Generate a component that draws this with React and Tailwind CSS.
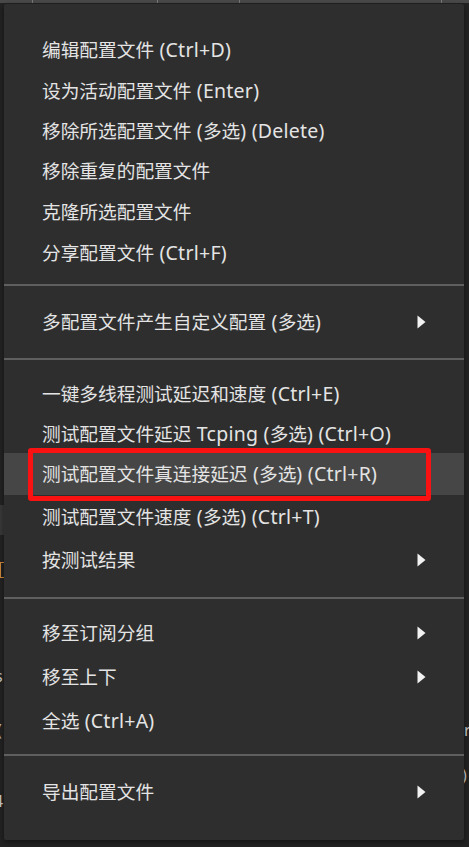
import React from "react";

const Arrow = () => (
  <svg width="9" height="14" viewBox="0 0 9 14" className="shrink-0">
    <path d="M0.5 0.5 L8.5 7 L0.5 13.5 Z" fill="#f2f2f2" />
  </svg>
);

const CJK = /[\u3000-\u9fff\uff00-\uffef]/;

function splitRuns(text) {
  const runs = [];
  let cur = "";
  let curCjk = null;
  for (const ch of text) {
    const isCjk = CJK.test(ch);
    if (curCjk === null || isCjk === curCjk) {
      cur += ch;
      curCjk = isCjk;
    } else {
      runs.push({ t: cur, cjk: curCjk });
      cur = ch;
      curCjk = isCjk;
    }
  }
  if (cur) runs.push({ t: cur, cjk: curCjk });
  return runs;
}

const Label = ({ text }) => (
  <span className="whitespace-pre">
    {splitRuns(text).map((r, i) =>
      r.cjk ? (
        <span key={i}>{r.t}</span>
      ) : (
        <span key={i} className="text-[19.5px] tracking-[0.25px]">
          {r.t}
        </span>
      )
    )}
  </span>
);

const Row = ({ label, h, arrow, active }) => (
  <div
    className={`flex items-center justify-between pl-[38px] pr-[38px] ${h} ${active ? "bg-[#464646]" : ""}`}
  >
    <Label text={label} />
    {arrow ? <Arrow /> : null}
  </div>
);

const Sep = ({ cls }) => <div className={`h-[2px] bg-[#5f5f5f] ${cls}`} />;

export default function App() {
  return (
    <div
      className="relative h-[847px] w-[469px] overflow-hidden bg-[#232323]"
      style={{ fontFamily: '"Noto Sans", "Noto Sans CJK SC", sans-serif' }}
    >
      {/* background app: header strip */}
      <div className="flex h-[3px] bg-[#4a4a4a]">
        <div className="w-[33px] border-r border-[#7a7a7a]" />
        <div className="w-[125px] border-r border-[#7a7a7a]" />
        <div className="w-[82px] border-r border-[#7a7a7a]" />
        <div className="w-[202px] border-r border-[#7a7a7a]" />
      </div>
      {/* background fragments at edges */}
      <div className="absolute left-0 top-[505px] h-[30px] w-[6px] bg-[#3a3a3a]" />
      <div className="absolute left-0 top-[562px] h-[16px] w-[5px] border border-[#d08a3a]" />
      <div className="absolute left-0 top-[668px] h-[18px] w-[4px] overflow-hidden">
        <div className="ml-[-5px] text-[16px] leading-none text-[#cfcfcf]">s</div>
      </div>
      <div className="absolute left-0 top-[722px] h-[18px] w-[4px] overflow-hidden">
        <div className="ml-[-3px] text-[16px] leading-none text-[#cfcfcf]">(</div>
      </div>
      <div className="absolute left-0 top-[793px] h-[18px] w-[4px] overflow-hidden">
        <div className="ml-[-6px] text-[16px] leading-none text-[#cfcfcf]">4</div>
      </div>
      <div className="absolute left-[464px] top-[722px] h-[18px] w-[5px] overflow-hidden">
        <div className="text-[16px] leading-none text-[#cfcfcf]">r</div>
      </div>
      <div className="absolute left-[462px] top-[767px] h-[18px] w-[7px] overflow-hidden">
        <div className="text-[16px] leading-none text-[#cfcfcf]">)</div>
      </div>

      {/* context menu */}
      <div className="absolute left-[4px] top-[4px] flex w-[460px] flex-col rounded-[2px] bg-[#2e2e2e] pb-[26px] pt-[25px] text-[18.7px] leading-none text-[#e4e4e4] shadow-[0_2px_6px_rgba(0,0,0,0.5)]">
        <Row label="编辑配置文件 (Ctrl+D)" h="h-[41px]" />
        <Row label="设为活动配置文件 (Enter)" h="h-[41px]" />
        <Row label="移除所选配置文件 (多选) (Delete)" h="h-[40px]" />
        <Row label="移除重复的配置文件" h="h-[41px]" />
        <Row label="克隆所选配置文件" h="h-[40px]" />
        <Row label="分享配置文件 (Ctrl+F)" h="h-[41px]" />
        <Sep cls="mt-[11px] mb-[14px]" />
        <Row label="多配置文件产生自定义配置 (多选)" h="h-[44px]" arrow />
        <Sep cls="mt-[14px] mb-[13px]" />
        <Row label="一键多线程测试延迟和速度 (Ctrl+E)" h="h-[41px]" />
        <Row label="测试配置文件延迟 Tcping (多选) (Ctrl+O)" h="h-[39px]" />
        <Row label="测试配置文件真连接延迟 (多选) (Ctrl+R)" h="h-[42px]" active />
        <Row label="测试配置文件速度 (多选) (Ctrl+T)" h="h-[43px]" />
        <Row label="按测试结果" h="h-[44px]" arrow />
        <Sep cls="mt-[15px] mb-[12px]" />
        <Row label="移至订阅分组" h="h-[44px]" arrow />
        <Row label="移至上下" h="h-[44px]" arrow />
        <Row label="全选 (Ctrl+A)" h="h-[44px]" />
        <Sep cls="mt-[11px] mb-[14px]" />
        <Row label="导出配置文件" h="h-[44px]" arrow />
      </div>

      {/* red annotation box */}
      <div className="absolute left-[28px] top-[448px] h-[53px] w-[403px] rounded-[3px] border-[5px] border-[#fa1111]" />
    </div>
  );
}
